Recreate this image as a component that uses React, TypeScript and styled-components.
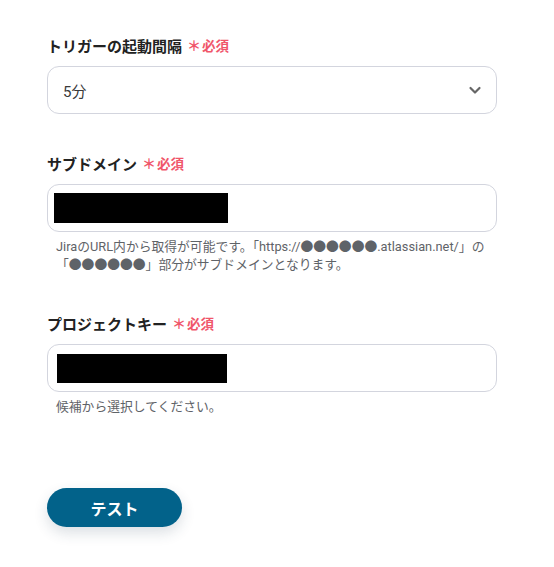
import React from "react";
import styled, { createGlobalStyle } from "styled-components";

const GlobalStyle = createGlobalStyle`
  body {
    margin: 0;
    background: #ffffff;
    font-family: "Roboto", "Noto Sans CJK JP", sans-serif;
    color: #2b2b2b;
  }
`;

const Page = styled.div`
  width: 554px;
  height: 567px;
  box-sizing: border-box;
  padding: 33px 57px 0 47px;
`;

const Field = styled.div<{ gapAfter: number }>`
  display: flex;
  flex-direction: column;
  margin-bottom: ${({ gapAfter }) => gapAfter}px;
`;

const Label = styled.div`
  display: flex;
  align-items: center;
  height: 24px;
  margin-bottom: 9px;
  font-size: 15px;
  font-weight: 700;
  color: #222;
`;

const Required = styled.span`
  display: inline-flex;
  align-items: center;
  margin-left: 5px;
  font-size: 13.5px;
  font-weight: 700;
  color: #f0566a;
  &::before {
    content: "＊";
    font-size: 14px;
    margin-right: 1px;
  }
`;

const Box = styled.div`
  position: relative;
  height: 48px;
  box-sizing: border-box;
  border: 1px solid #d3d5de;
  border-radius: 12px;
  display: flex;
  align-items: center;
  padding: 0 14px 0 15px;
  background: #fff;
`;

const Value = styled.span`
  flex: 1;
  font-size: 15px;
  color: #3a3a3a;
`;

const Masked = styled.div<{ left: number; w: number; h: number }>`
  margin-left: ${({ left }) => left}px;
  width: ${({ w }) => w}px;
  height: ${({ h }) => h}px;
  background: #000;
`;

const Help = styled.p`
  margin: 6px 0 0 9px;
  font-size: 12.8px;
  line-height: 18px;
  color: #5f6368;
`;

const Button = styled.button`
  width: 135px;
  height: 39px;
  border: none;
  border-radius: 20px;
  background: #02628a;
  color: #fff;
  font-family: "Noto Sans CJK JP", sans-serif;
  font-size: 16px;
  font-weight: 700;
  box-shadow: 0 6px 14px rgba(40, 60, 90, 0.16);
  cursor: pointer;
`;

const Chevron = () => (
  <svg width="14" height="14" viewBox="0 0 14 14">
    <path d="M2.5 5 L7 9.5 L11.5 5" fill="none" stroke="#666" strokeWidth="2.2" strokeLinecap="round" strokeLinejoin="round" />
  </svg>
);

export default function App() {
  return (
    <>
      <GlobalStyle />
      <Page>
        <Field gapAfter={37}>
          <Label>
            トリガーの起動間隔<Required>必須</Required>
          </Label>
          <Box>
            <Value>5分</Value>
            <Chevron />
          </Box>
        </Field>
        <Field gapAfter={37}>
          <Label>
            サブドメイン<Required>必須</Required>
          </Label>
          <Box>
            <Masked left={-9} w={174} h={30} />
          </Box>
          <Help>
            JiraのURL内から取得が可能です。「https://●●●●●●.atlassian.net/」の
            <br />
            「●●●●●●」部分がサブドメインとなります。
          </Help>
        </Field>
        <Field gapAfter={72}>
          <Label>
            プロジェクトキー<Required>必須</Required>
          </Label>
          <Box>
            <Masked left={-6} w={170} h={29} />
          </Box>
          <Help>候補から選択してください。</Help>
        </Field>
        <Button>テスト</Button>
      </Page>
    </>
  );
}
